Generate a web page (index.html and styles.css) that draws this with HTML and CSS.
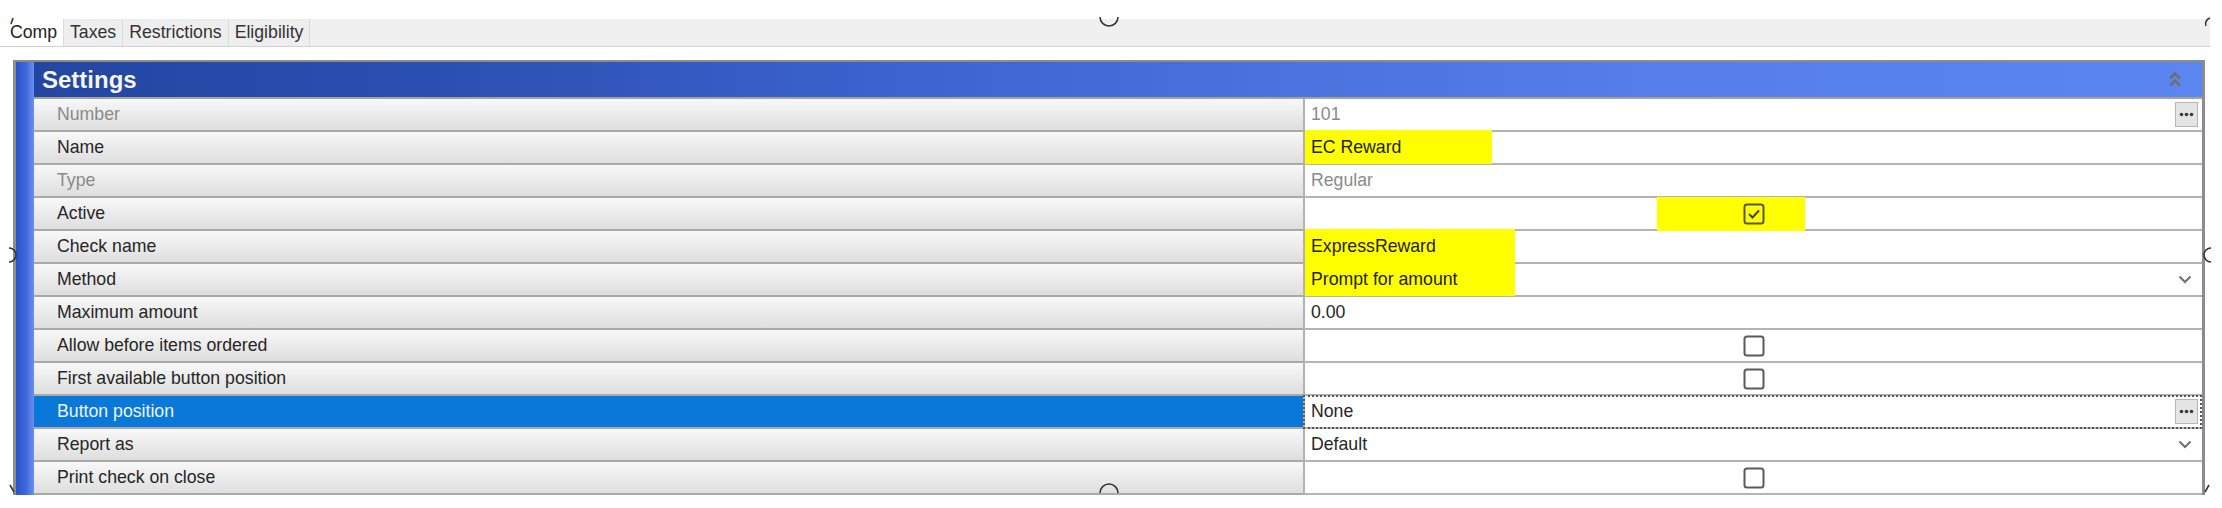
FILE: index.html
```html
<!DOCTYPE html>
<html lang="en">
<head>
    <meta charset="UTF-8">
    <title>Comp Settings</title>
    <link rel="stylesheet" href="styles.css">
</head>
<body>
<div class="page">

    <div class="tabs">
        <div class="tab active">Comp</div>
        <div class="tab">Taxes</div>
        <div class="tab">Restrictions</div>
        <div class="tab">Eligibility</div>
        <div class="tab-fill"></div>
    </div>

    <div class="panel">
        <div class="strip"></div>
        <div class="main">
            <div class="header">
                <span class="title">Settings</span>
                <svg class="collapse" width="14" height="17" viewBox="0 0 14 17">
                    <path d="M2 7.5 L7 2.5 L12 7.5" fill="none" stroke="#6f6f6f" stroke-width="2.6"/>
                    <path d="M2 14.5 L7 9.5 L12 14.5" fill="none" stroke="#6f6f6f" stroke-width="2.6"/>
                </svg>
            </div>

            <div class="row">
                <div class="label muted">Number</div>
                <div class="value split">
                    <span class="muted">101</span>
                    <span class="dots"><svg width="15" height="5" viewBox="0 0 15 5"><circle cx="2.5" cy="2.5" r="1.8"/><circle cx="7.5" cy="2.5" r="1.8"/><circle cx="12.5" cy="2.5" r="1.8"/></svg></span>
                </div>
            </div>
            <div class="row">
                <div class="label">Name</div>
                <div class="value flush"><span class="hl hl-name">EC Reward</span></div>
            </div>
            <div class="row">
                <div class="label muted">Type</div>
                <div class="value"><span class="muted">Regular</span></div>
            </div>
            <div class="row">
                <div class="label">Active</div>
                <div class="value center">
                    <span class="hl-box"></span>
                    <svg class="check" width="22" height="22" viewBox="0 0 22 22">
                        <rect x="1.5" y="1.5" width="19" height="19" rx="2.5" fill="none" stroke="#555" stroke-width="2"/>
                        <path d="M6 11 L9.5 14.5 L16 7.5" fill="none" stroke="#444" stroke-width="2"/>
                    </svg>
                </div>
            </div>
            <div class="row">
                <div class="label">Check name</div>
                <div class="value flush"><span class="hl hl-wide">ExpressReward</span></div>
            </div>
            <div class="row">
                <div class="label">Method</div>
                <div class="value flush split"><span class="hl hl-wide">Prompt for amount</span><svg class="chev" width="14" height="9" viewBox="0 0 14 9"><path d="M1.5 1.5 L7 7 L12.5 1.5" fill="none" stroke="#707070" stroke-width="2"/></svg></div>
            </div>
            <div class="row">
                <div class="label">Maximum amount</div>
                <div class="value">0.00</div>
            </div>
            <div class="row">
                <div class="label">Allow before items ordered</div>
                <div class="value center">
                    <svg class="check" width="22" height="22" viewBox="0 0 22 22"><rect x="1.5" y="1.5" width="19" height="19" rx="2.5" fill="#fff" stroke="#5a5a5a" stroke-width="2"/></svg>
                </div>
            </div>
            <div class="row">
                <div class="label">First available button position</div>
                <div class="value center">
                    <svg class="check" width="22" height="22" viewBox="0 0 22 22"><rect x="1.5" y="1.5" width="19" height="19" rx="2.5" fill="#fff" stroke="#5a5a5a" stroke-width="2"/></svg>
                </div>
            </div>
            <div class="row selected">
                <div class="label">Button position</div>
                <div class="value split focus">
                    <span>None</span>
                    <span class="dots"><svg width="15" height="5" viewBox="0 0 15 5"><circle cx="2.5" cy="2.5" r="1.8"/><circle cx="7.5" cy="2.5" r="1.8"/><circle cx="12.5" cy="2.5" r="1.8"/></svg></span>
                </div>
            </div>
            <div class="row">
                <div class="label">Report as</div>
                <div class="value split"><span>Default</span><svg class="chev" width="14" height="9" viewBox="0 0 14 9"><path d="M1.5 1.5 L7 7 L12.5 1.5" fill="none" stroke="#707070" stroke-width="2"/></svg></div>
            </div>
            <div class="row">
                <div class="label">Print check on close</div>
                <div class="value center">
                    <svg class="check" width="22" height="22" viewBox="0 0 22 22"><rect x="1.5" y="1.5" width="19" height="19" rx="2.5" fill="#fff" stroke="#5a5a5a" stroke-width="2"/></svg>
                </div>
            </div>
        </div>
    </div>

    <!-- picture handles left over from the screenshot -->
    <svg class="handles" width="2222" height="508" viewBox="0 0 2222 508">
        <g fill="none" stroke="#333" stroke-width="1.6">
            <path d="M1100 17 A9 9 0 0 0 1118 17"/>
            <path d="M1100 493 A9 9 0 0 1 1118 493"/>
            <path d="M9 248 A7 7 0 0 1 9 262"/>
            <path d="M2211 248 A7 7 0 0 0 2211 262"/>
            <path d="M11 24 L13 18"/>
            <path d="M2210 18 A6 6 0 0 0 2206 26"/>
            <path d="M10 485 L14 492"/>
            <path d="M2205 492 L2209 485"/>
        </g>
    </svg>
</div>
</body>
</html>
```

FILE: styles.css
```css
/* Page */
body {
    margin: 0;
    background-color: #fff;
    font-family: "Liberation Sans", Arial, sans-serif;
    font-size: 17.7px;
    color: #262626;
}

.page {
    position: relative;
    width: 2222px;
    height: 508px;
    padding-top: 19px;
    box-sizing: border-box;
    overflow: hidden;
}

/* Tab strip */
.tabs {
    display: flex;
    height: 28px;
    margin-right: 12px;
    border-bottom: 1px solid #d2d2d2;
    box-sizing: border-box;
}

.tab {
    padding: 0 6px;
    line-height: 27px;
    background-color: #eeeeee;
    border-left: 1px solid #dadada;
    color: #333;
}

.tab.active {
    width: 46px;
    padding: 0 7px 0 10px;
    background-color: #fff;
    border-left: none;
    color: #222;
}

.tab-fill {
    flex: 1;
    background-color: #f0f0f0;
    border-left: 1px solid #dadada;
}

/* Settings panel */
.panel {
    display: flex;
    height: 433px;
    margin: 13px 17px 0 13px;
    border: 3px solid #8c8c8c;
    border-top-width: 2px;
    border-bottom: none;
    overflow: hidden;
}

.strip {
    width: 18px;
    background: linear-gradient(to right, #2752c8, #3f69da 55%, #6a8ff0);
}

.main {
    flex: 1;
}

.header {
    display: flex;
    align-items: center;
    justify-content: space-between;
    height: 37px;
    padding: 0 20px 0 8px;
    box-sizing: border-box;
    border-bottom: 2px solid #a3a3a3;
    background: linear-gradient(to right, #2346a1 0%, #2a4fb2 18%, #3a62cc 38%, #4a73dd 58%, #557ee8 75%, #5b86f1 100%);
}

.title {
    font-size: 24px;
    font-weight: bold;
    color: #f4f6ff;
    text-shadow: 0 0 1px rgba(0, 0, 0, 0.3);
}

/* Property rows */
.row {
    display: grid;
    grid-template-columns: 1269px 1fr;
    height: 33px;
}

.label {
    display: flex;
    align-items: center;
    padding-left: 23px;
    border-bottom: 2px solid #a9a9a9;
    background: linear-gradient(#f8f8f8, #ececec 45%, #dedede);
}

.value {
    position: relative;
    display: flex;
    align-items: center;
    padding-left: 6px;
    border-left: 2px solid #b2b2b2;
    border-bottom: 2px solid #b4b4b4;
    background-color: #fff;
}

.muted {
    color: #8a8a8a;
}

.value.split {
    justify-content: space-between;
}

.value.center {
    justify-content: center;
    padding-left: 0;
}

.value.flush {
    padding-left: 0;
}

.selected .label {
    background: #0a78d8;
    color: #eef4ff;
}

.focus::after {
    content: "";
    position: absolute;
    left: -2px;
    right: 0;
    top: -1px;
    bottom: -2px;
    border: 2px dotted #555;
}

/* Yellow highlights */
.hl {
    display: flex;
    align-items: center;
    height: calc(100% + 3px);
    margin-top: -1px;
    padding-left: 6px;
    box-sizing: border-box;
    background-color: #ffff00;
    color: #222;
}

.hl-name {
    width: 187px;
}

.hl-wide {
    width: 210px;
}

.hl-box {
    position: absolute;
    left: 352px;
    top: -1px;
    width: 148px;
    height: 34px;
    background-color: #ffff00;
}

.check {
    position: relative;
}

/* Small controls */
.dots {
    display: flex;
    align-items: center;
    justify-content: center;
    width: 21px;
    height: 23px;
    margin-right: 4px;
    fill: #3a3a3a;
    background-color: #e4e4e4;
    border: 1px solid #b5b5b5;
}

.chev {
    margin-right: 10px;
}

.handles {
    position: absolute;
    left: 0;
    top: 0;
    pointer-events: none;
}
```
